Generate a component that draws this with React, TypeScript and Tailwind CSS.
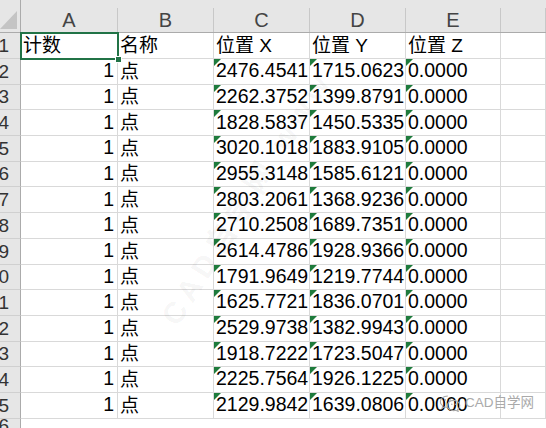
const rows = [
  ["2476.4541", "1715.0623"],
  ["2262.3752", "1399.8791"],
  ["1828.5837", "1450.5335"],
  ["3020.1018", "1883.9105"],
  ["2955.3148", "1585.6121"],
  ["2803.2061", "1368.9236"],
  ["2710.2508", "1689.7351"],
  ["2614.4786", "1928.9366"],
  ["1791.9649", "1219.7744"],
  ["1625.7721", "1836.0701"],
  ["2529.9738", "1382.9943"],
  ["1918.7222", "1723.5047"],
  ["2225.7564", "1926.1225"],
  ["2129.9842", "1639.0806"],
];

const font = "font-['Liberation_Sans','Noto_Sans_CJK_SC',sans-serif]";

function Flag() {
  return (
    <span className="absolute left-0 top-0 h-0 w-0 border-t-[7px] border-r-[7px] border-t-[#1e7b3c] border-r-transparent" />
  );
}

function RowHead({ n }: { n: number | string }) {
  return (
    <div className="flex h-full w-[21px] shrink-0 items-end justify-end overflow-hidden border-r border-b border-r-[#ababab] border-b-[#d0d0d0] bg-[#e6e6e6] pr-[11px] pb-[3px] text-[19px] leading-none text-[#333]">
      <span className="whitespace-nowrap">{n}</span>
    </div>
  );
}

function Cell({
  w,
  children,
  right,
  flag,
}: {
  w: string;
  children?: React.ReactNode;
  right?: boolean;
  flag?: boolean;
}) {
  return (
    <div
      className={`relative flex h-full shrink-0 items-end whitespace-nowrap border-r border-b border-[#d9d9d9] pb-[3px] leading-none ${w} ${
        right ? "justify-end pr-[3px]" : "pl-[2px]"
      }`}
    >
      {flag && <Flag />}
      {children}
    </div>
  );
}

function WeChat() {
  return (
    <svg width="23" height="18" viewBox="0 0 26 20" fill="none" stroke="#a8a8a8" strokeWidth="1.2">
      <path d="M10 2C5 2 1.5 5 1.5 8.5c0 2 1 3.6 2.7 4.8L3.5 16l3-1.6c1 .3 2.2.5 3.5.5" />
      <path d="M16.5 7c-4 0-7 2.6-7 5.8s3 5.8 7 5.8c.9 0 1.8-.1 2.6-.4l2.6 1.4-.6-2.4c1.5-1.1 2.4-2.7 2.4-4.4 0-3.2-3-5.8-7-5.8z" />
      <circle cx="7" cy="6.5" r=".9" fill="#a8a8a8" stroke="none" />
      <circle cx="12.5" cy="6.5" r=".9" fill="#a8a8a8" stroke="none" />
      <circle cx="14.5" cy="11.5" r=".8" fill="#a8a8a8" stroke="none" />
      <circle cx="18.5" cy="11.5" r=".8" fill="#a8a8a8" stroke="none" />
    </svg>
  );
}

export default function App() {
  return (
    <div className={`relative h-[428px] w-[546px] overflow-hidden bg-white text-black ${font}`}>
      {/* column headers */}
      <div className="flex h-[33px] border-b border-[#ababab] bg-[#e6e6e6] text-[20px] text-[#444]">
        <div className="relative w-[21px] shrink-0 border-r border-[#ababab]">
          <span className="absolute bottom-[3px] right-[3px] h-0 w-0 border-b-[18px] border-l-[17px] border-b-[#c4c4c4] border-l-transparent" />
        </div>
        {[
          ["A", "w-[97px]"],
          ["B", "w-[96px]"],
          ["C", "w-[96px]"],
          ["D", "w-[96px]"],
          ["E", "w-[95px]"],
          ["", "flex-1"],
        ].map(([l, w], i) => (
          <div key={i} className={`flex shrink-0 flex-col ${w}`}>
            <div className="h-[8px]" />
            <div className="flex flex-1 items-center justify-center border-r border-[#c8c8c8] pb-[1px] leading-none">
              {l}
            </div>
          </div>
        ))}
      </div>

      {/* row 1 */}
      <div className="flex h-[26px] text-[19px]">
        <RowHead n={1} />
        <Cell w="w-[97px]">计数</Cell>
        <Cell w="w-[96px]">名称</Cell>
        <Cell w="w-[96px]">位置 X</Cell>
        <Cell w="w-[96px]">位置 Y</Cell>
        <Cell w="w-[95px]">位置 Z</Cell>
        <div className="h-full flex-1 border-r border-b border-[#d9d9d9]" />
      </div>

      {rows.map(([x, y], i) => (
        <div key={i} className="flex h-[25.7px] text-[19.5px]">
          <RowHead n={i + 2} />
          <Cell w="w-[97px]" right>
            1
          </Cell>
          <Cell w="w-[96px]">
            <span className="text-[19px]">点</span>
          </Cell>
          <Cell w="w-[96px]" flag>
            {x}
          </Cell>
          <Cell w="w-[96px]" flag>
            {y}
          </Cell>
          <Cell w="w-[95px]" flag>
            0.0000
          </Cell>
          <div className="h-full flex-1 border-r border-b border-[#d9d9d9]" />
        </div>
      ))}
      <div className="flex h-[20px]">
        <RowHead n={16} />
      </div>

      {/* selection on A1 */}
      <div className="pointer-events-none absolute left-[20px] top-[32px] h-[28px] w-[99px] border-2 border-[#217346]" />
      <div className="absolute left-[115px] top-[56px] h-[7px] w-[7px] border border-white bg-[#217346]" />

      {/* diagonal watermark */}
      <div className="pointer-events-none absolute left-[100px] top-[175px] -rotate-[58deg] whitespace-nowrap text-[30px] font-bold tracking-[6px] text-[#000]/[0.05]">
        CAD自学网 www
      </div>

      {/* corner watermark */}
      <div className="absolute left-[439px] top-[394px] flex items-center gap-[3px] whitespace-nowrap text-[13.5px] leading-none text-[#aaa]">
        <WeChat />
        <span>CAD自学网</span>
      </div>
    </div>
  );
}
